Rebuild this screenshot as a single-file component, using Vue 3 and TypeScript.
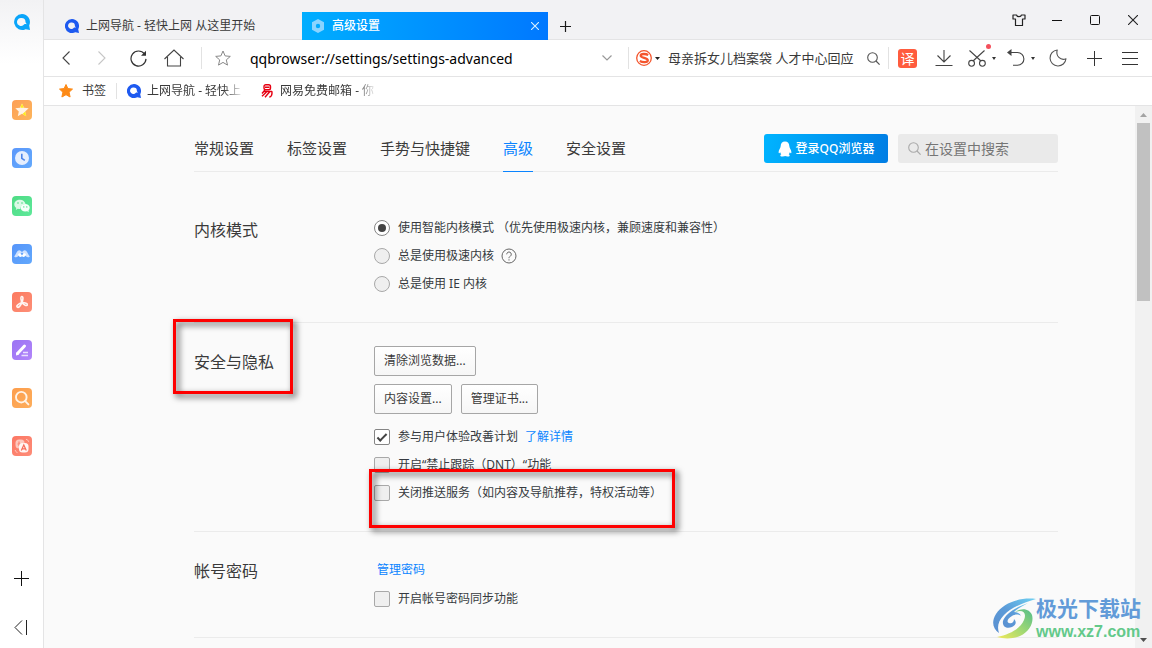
<script setup lang="ts">
import { ref } from 'vue'

interface SideApp { id: string; label: string; from: string; to: string }

const sideApps: SideApp[] = [
  { id: 'fav', label: '收藏', from: '#fd9f56', to: '#fdb55c' },
  { id: 'history', label: '历史', from: '#5b97fb', to: '#64aafc' },
  { id: 'wechat', label: '微信', from: '#4edb84', to: '#5ee89a' },
  { id: 'wave', label: '文档', from: '#5695fa', to: '#62a8fc' },
  { id: 'pdf', label: 'PDF', from: '#fc7a5f', to: '#fd8f78' },
  { id: 'edit', label: '编辑', from: '#9a74f3', to: '#b285fa' },
  { id: 'find', label: '搜索', from: '#fd9d4c', to: '#fdae5c' },
  { id: 'trans', label: '翻译', from: '#fc7764', to: '#fd8c78' },
]

const settingTabs = ['常规设置', '标签设置', '手势与快捷键', '高级', '安全设置']
const activeTab = ref('高级')
const kernel = ref('smart')
const joinPlan = ref(true)
const dnt = ref(false)
const closePush = ref(false)
const syncPassword = ref(false)
const address = ref('qqbrowser://settings/settings-advanced')
const query = ref('')
const settingQuery = ref('')
</script>

<template>
  <div class="browser">
    <aside class="side">
      <a class="side-logo" href="#" aria-label="QQ浏览器">
        <svg width="18" height="18" viewBox="0 0 18 18"><path fill="#0aa5fa" fill-rule="evenodd" d="M9 1a8 8 0 1 0 3.600 15.200L17 17l-.8-4.600A8 8 0 0 0 9 1zM8.500 5a4 4 0 0 1 4 4c0 .8.9 1.500 1.500 2.300-1.200-.4-2.100-.6-2.700 0A4 4 0 1 1 8.500 5z" /></svg>
      </a>
      <nav class="side-apps">
        <button v-for="app in sideApps" :key="app.id" type="button" class="side-btn" :aria-label="app.label">
          <svg width="20" height="20" viewBox="0 0 20 20">
            <defs>
              <linearGradient :id="'g-' + app.id" x1="0" y1="0" x2="1" y2="1">
                <stop offset="0" :stop-color="app.from" />
                <stop offset="1" :stop-color="app.to" />
              </linearGradient>
            </defs>
            <rect width="20" height="20" rx="4" :fill="'url(#g-' + app.id + ')'" />
            <g v-if="app.id === 'fav'">
              <path fill="#fff3e4" d="M10 3.500l2 4.300 4.700.5-3.500 3.200 1 4.700-4.200-2.400-4.200 2.400 1-4.700L3.300 8.300 8 7.800z" />
              <path fill="#ffeb1e" d="M10 3.500l1.900 4.300H9.200L8.300 7.400zM13.300 11.500l.9 4.700-3.700-2.100z" />
            </g>
            <g v-else-if="app.id === 'history'">
              <circle cx="10" cy="10" r="7" fill="#e6effe" />
              <path d="M9.800 5.800v4.600l3 2" fill="none" stroke="#4d84e8" stroke-width="1.600" />
            </g>
            <g v-else-if="app.id === 'wechat'">
              <path fill="#dcf9e6" d="M8 3.800c-3.200 0-5.700 2-5.700 4.600 0 1.500.8 2.700 2 3.600l-.5 1.900 2-1.100c1 .3 1.800.3 2.600.3 0-3 2.200-4.700 5.200-4.800C13.200 5.700 10.900 3.800 8 3.800z" />
              <ellipse cx="13.200" cy="11.800" rx="4.500" ry="3.800" fill="#f7fffa" />
              <path d="M15 15l1.700 1.300-.3-2.200z" fill="#f7fffa" />
              <g fill="#4edb84"><circle cx="6" cy="7" r=".8" /><circle cx="10" cy="7" r=".8" /><circle cx="11.800" cy="10.900" r=".7" /><circle cx="14.800" cy="10.900" r=".7" /></g>
            </g>
            <g v-else-if="app.id === 'wave'">
              <path d="M2.200 12.500C4 10.500 5 6.300 7.300 6.300c1.200 0 2 1 2.700 2 .7-1 1.500-2 2.700-2 2.300 0 3.300 4.200 5.100 6.200-1.200 1.300-2.800 1-3.900-.3L10 8.500l-3.900 3.700c-1.100 1.300-2.700 1.600-3.900.3z" fill="#cfe2ff" />
              <path d="M6 10.500c.8-1.600 2.300-1.600 3-.4l1 1.300 1-1.300c.7-1.200 2.200-1.200 3 .4-.7 2-2.200 3.500-4 1.800-1.800 1.700-3.300.2-4-1.800z" fill="#fff" />
            </g>
            <g v-else-if="app.id === 'pdf'" fill="none" stroke="#fff4f1" stroke-width="1.600" stroke-linecap="round">
              <path d="M10 10.500c-.8-2-1.900-5.700-.3-6s1.600 3 .3 6zM10 10.500c-1 2.400-3.300 5.700-4.700 4.700s.7-3.400 4.700-4.700zM10 10.500c3.400.2 5.700 1.100 5.300 2.400s-3.500.2-5.300-2.400z" />
            </g>
            <g v-else-if="app.id === 'edit'">
              <path d="M5.500 13.500l7-7.500" stroke="#fff" stroke-width="3" stroke-linecap="round" />
              <path d="M4 15.500l.4-3.200 2.500 2.500z" fill="#fff" />
              <path d="M11 12.500h5M9.500 15.500h6.500" stroke="#eadfff" stroke-width="1.500" />
            </g>
            <g v-else-if="app.id === 'find'" fill="none" stroke="#fff3e6" stroke-width="1.900" stroke-linecap="round">
              <circle cx="9.300" cy="9.200" r="5.300" /><path d="M13.200 13.200l3.200 3.200" />
            </g>
            <g v-else>
              <rect x="3.500" y="3.500" width="9" height="9" rx="3.500" fill="#fdc8be" />
              <path d="M5.500 8h3M7 5.500v4.500" stroke="#fc8675" stroke-width="1.200" />
              <rect x="7" y="7" width="9.500" height="9.500" rx="3.500" fill="#fff5f3" />
              <path d="M9.300 14.500l2.500-5.500 2.500 5.500M10.300 12.800h3" fill="none" stroke="#f76a58" stroke-width="1.200" />
              <path d="M14 3.300c1.500.3 2.400 1.200 2.700 2.500M3.200 14c.3 1.500 1 2.200 2.300 2.600" fill="none" stroke="#fdc8be" />
            </g>
          </svg>
        </button>
      </nav>
      <div class="side-foot">
        <button type="button" class="foot-btn" aria-label="添加">
          <svg width="15" height="15" viewBox="0 0 15 15"><path d="M7.500 0v15M0 7.500h15" stroke="#111" /></svg>
        </button>
        <button type="button" class="foot-btn" aria-label="收起">
          <svg width="15" height="15" viewBox="0 0 15 15"><path d="M8 .5l-7 7 7 7M12.500 0v15" fill="none" stroke="#222" /></svg>
        </button>
      </div>
    </aside>

    <div class="main">
      <header class="titlebar">
        <div class="tab">
          <svg class="tab-icon" width="14" height="14" viewBox="0 0 18 18"><path fill="#1e5af0" fill-rule="evenodd" d="M9 0a9 9 0 1 0 4.200 16.900L18 18l-1-4.800A9 9 0 0 0 9 0zM8.500 4.500a4.200 4.200 0 0 1 4.200 4.200c0 1 .9 1.800 1.600 2.700-1.200-.5-2.200-.6-2.900 0A4.200 4.200 0 1 1 8.500 4.500z" /></svg>
          <span class="tab-text">上网导航 - 轻快上网 从这里开始</span>
        </div>
        <div class="tab tab-active">
          <svg class="tab-icon" width="14" height="14" viewBox="0 0 14 14"><path fill="#8ad4ff" fill-rule="evenodd" d="M7 0l6 3.300v7.400L7 14l-6-3.300V3.300zM7 4.800a2.200 2.200 0 1 0 0 4.400 2.200 2.200 0 0 0 0-4.400z" /></svg>
          <span class="tab-text">高级设置</span>
          <button type="button" class="tab-close" aria-label="关闭标签">
            <svg width="8" height="8" viewBox="0 0 8 8"><path d="M0 0l8 8M8 0L0 8" stroke="#d8f0ff" stroke-width="1.100" /></svg>
          </button>
        </div>
        <button type="button" class="new-tab" aria-label="新建标签">
          <svg width="11" height="11" viewBox="0 0 11 11"><path d="M5.500 0v11M0 5.500h11" stroke="#1a1a1a" stroke-width="1.200" /></svg>
        </button>
        <div class="win">
          <button type="button" aria-label="皮肤"><svg width="14" height="12" viewBox="0 0 14 12"><path d="M1 1h3.500c.6 2.200 4.400 2.200 5 0H13v4h-2.500v6.500h-7V5H1z" fill="none" stroke="#222" stroke-width="1.200" stroke-linejoin="round" /></svg></button>
          <button type="button" aria-label="最小化"><svg width="10" height="2" viewBox="0 0 10 2"><path d="M0 1.500h10" stroke="#111" /></svg></button>
          <button type="button" aria-label="最大化"><svg width="10" height="10" viewBox="0 0 10 10"><rect x=".5" y=".5" width="9" height="9" rx="1" fill="none" stroke="#111" /></svg></button>
          <button type="button" aria-label="关闭"><svg width="10" height="10" viewBox="0 0 10 10"><path d="M0 0l10 10M10 0L0 10" stroke="#222" stroke-width="1.100" /></svg></button>
        </div>
      </header>

      <div class="toolbar">
        <div class="nav-btns">
          <button type="button" aria-label="后退"><svg width="8" height="14" viewBox="0 0 8 14"><path d="M7.500.5L1 7l6.500 6.500" fill="none" stroke="#444" stroke-width="1.100" /></svg></button>
          <button type="button" aria-label="前进"><svg width="8" height="14" viewBox="0 0 8 14"><path d="M.5.500L7 7 .5 13.500" fill="none" stroke="#c6c6c6" stroke-width="1.100" /></svg></button>
          <button type="button" aria-label="刷新"><svg width="17" height="17" viewBox="0 0 17 17"><path d="M14.500 4A7.500 7.500 0 1 0 16 8.900" fill="none" stroke="#333" stroke-width="1.200" /><path d="M16 .8v5h-5z" fill="#333" /></svg></button>
          <button type="button" aria-label="主页"><svg width="20" height="18" viewBox="0 0 20 18"><path d="M.5 10L10 1l9.500 9M3.500 8v9h13V8" fill="none" stroke="#444" stroke-width="1.100" /></svg></button>
        </div>
        <span class="rule"></span>
        <button type="button" class="star-btn" aria-label="收藏"><svg width="16" height="16" viewBox="0 0 16 16"><path d="M8 1l2.100 4.900 5.200.5-4 3.500 1.200 5.200L8 12.400l-4.500 2.700 1.200-5.200-4-3.500 5.200-.5z" fill="none" stroke="#888" /></svg></button>
        <input v-model="address" class="address" type="text" aria-label="地址" />
        <button type="button" class="drop-btn" aria-label="展开地址"><svg width="10" height="6" viewBox="0 0 10 6"><path d="M.5.500L5 5 9.500.5" fill="none" stroke="#999" stroke-width="1.200" /></svg></button>
        <span class="rule"></span>
        <div class="search">
          <button type="button" class="engine" aria-label="搜索引擎">
            <svg width="16" height="16" viewBox="0 0 16 16"><circle cx="8" cy="8" r="7.300" fill="#fff" stroke="#f4552d" stroke-width="1.300" /><path d="M12.200 5C10 3.700 4.700 3.400 4.700 5.700S11.800 7.700 11.800 10.200 6.500 12.500 3.800 11" fill="none" stroke="#f4552d" stroke-width="2.300" /></svg>
            <svg width="5" height="3" viewBox="0 0 5 3"><path d="M0 0h5L2.500 3z" fill="#222" /></svg>
          </button>
          <input v-model="query" class="search-text" type="text" aria-label="搜索" placeholder="母亲拆女儿档案袋 人才中心回应" />
          <button type="button" class="search-go" aria-label="搜索"><svg width="13" height="13" viewBox="0 0 13 13"><circle cx="5.500" cy="5.500" r="4.800" fill="none" stroke="#555" stroke-width="1.100" /><path d="M9 9l3.600 3.600" stroke="#555" stroke-width="1.200" /></svg></button>
        </div>
        <span class="rule"></span>
        <button type="button" class="tool tool-first"><span class="translate">译</span></button>
        <button type="button" class="tool" aria-label="下载"><svg width="18" height="18" viewBox="0 0 18 18"><path d="M9 1v12M2.500 6.500L9 13l6.500-6.500M.5 16.500h17" fill="none" stroke="#444" stroke-width="1.100" /></svg></button>
        <button type="button" class="tool tool-split" aria-label="截图">
          <svg width="18" height="18" viewBox="0 0 18 18"><path d="M1.500 1.500L13 12M16.500 1.500L5 12" stroke="#444" stroke-width="1.100" /><circle cx="3.600" cy="14.300" r="2.900" fill="none" stroke="#444" stroke-width="1.100" /><circle cx="14.400" cy="14.300" r="2.900" fill="none" stroke="#444" stroke-width="1.100" /></svg>
          <svg width="4" height="3" viewBox="0 0 4 3"><path d="M0 0h4L2 3z" fill="#333" /></svg>
          <span class="dot"></span>
        </button>
        <button type="button" class="tool tool-split" aria-label="撤销">
          <svg width="18" height="18" viewBox="0 0 18 18"><path d="M3 3.500h7.500a6.400 6.400 0 0 1 0 12.800H6" fill="none" stroke="#444" stroke-width="1.100" /><path d="M0 3.500L4.500 0v7z" fill="#444" /></svg>
          <svg width="4" height="3" viewBox="0 0 4 3"><path d="M0 0h4L2 3z" fill="#333" /></svg>
        </button>
        <button type="button" class="tool" aria-label="夜间模式"><svg width="18" height="18" viewBox="0 0 18 18"><path d="M8.200 1A8 8 0 1 0 17 9.800C11.500 12 6.500 7 8.200 1z" fill="none" stroke="#555" stroke-width="1.100" stroke-linejoin="round" /></svg></button>
        <button type="button" class="tool" aria-label="添加"><svg width="15" height="15" viewBox="0 0 15 15"><path d="M7.500 0v15M0 7.500h15" stroke="#333" /></svg></button>
        <button type="button" class="tool" aria-label="菜单"><svg width="16" height="13" viewBox="0 0 16 13"><path d="M0 .5h16M0 6.500h16M0 12.500h16" stroke="#333" /></svg></button>
      </div>

      <nav class="bookmarks">
        <a href="#" class="mark mark-root">
          <svg width="14" height="14" viewBox="0 0 14 14"><path d="M7 .5l1.900 4.100 4.600.5-3.400 3.100 1 4.800L7 10.700 2.900 13l1-4.800L.5 5.100l4.600-.5z" fill="#fd8a16" stroke="#fd8a16" stroke-linejoin="round" /></svg>
          <span>书签</span>
        </a>
        <span class="rule rule-short"></span>
        <a href="#" class="mark">
          <svg width="14" height="14" viewBox="0 0 18 18"><path fill="#1e5af0" fill-rule="evenodd" d="M9 0a9 9 0 1 0 4.200 16.900L18 18l-1-4.800A9 9 0 0 0 9 0zM8.500 4.500a4.200 4.200 0 0 1 4.200 4.200c0 1 .9 1.800 1.600 2.700-1.200-.5-2.200-.6-2.900 0A4.200 4.200 0 1 1 8.500 4.500z" /></svg>
          <span class="fade">上网导航 - 轻快上</span>
        </a>
        <a href="#" class="mark">
          <svg width="14" height="14" viewBox="0 0 14 14" fill="none" stroke="#e60012" stroke-width="1.400"><rect x="4" y=".8" width="6.500" height="5" rx="1.800" /><path d="M5 3.300h4.500M3 7.500h9M5 6L2 9.500M12 7.300c.3 3.500-.7 5.700-2.700 5.700M6.500 8L2 12.300M9.500 8L5 13.300" /></svg>
          <span class="fade">网易免费邮箱 - 你</span>
        </a>
      </nav>

      <div class="view">
        <main class="page">
          <header class="page-head">
            <nav class="set-tabs">
              <a v-for="t in settingTabs" :key="t" href="#" :class="{ on: t === activeTab }" @click.prevent="activeTab = t">{{ t }}</a>
            </nav>
            <div class="head-tools">
              <button type="button" class="login">
                <svg width="14" height="16" viewBox="0 0 14 16"><path d="M7 .5c-2.800 0-4.300 2-4.300 4.600C2.700 7 .6 9 .6 11.200c0 1 .4 1.300.9.900l.7-.9c.2.9.6 1.600 1.100 2.100-.8.400-1.100 1-.9 1.600C3 15.700 6 15.500 7 15c1 .5 4 .7 4.600-.1.200-.6-.1-1.200-.9-1.600.5-.5.9-1.200 1.100-2.100l.7.900c.5.400.9.100.9-.9 0-2.200-2.100-4.200-2.100-6.100C11.300 2.500 9.800.5 7 .5z" fill="#fff" /></svg>
                <span>登录QQ浏览器</span>
              </button>
              <label class="find">
                <svg width="13" height="13" viewBox="0 0 13 13"><circle cx="5.500" cy="5.500" r="4.800" fill="none" stroke="#aaa" stroke-width="1.100" /><path d="M9 9l3.600 3.600" stroke="#aaa" stroke-width="1.200" /></svg>
                <input v-model="settingQuery" type="text" aria-label="在设置中搜索" placeholder="在设置中搜索" />
              </label>
            </div>
          </header>

          <section class="block block-first">
            <h2>内核模式</h2>
            <div class="body">
              <div class="row"><label><input v-model="kernel" type="radio" name="kernel" value="smart" /><span>使用智能内核模式 （优先使用极速内核，兼顾速度和兼容性）</span></label></div>
              <div class="row">
                <label><input v-model="kernel" type="radio" name="kernel" value="fast" /><span>总是使用极速内核</span></label>
                <button type="button" class="help" aria-label="帮助"><svg width="16" height="16" viewBox="0 0 16 16" fill="none" stroke="#666"><circle cx="8" cy="8" r="7" /><path d="M5.700 6.300a2.300 2.300 0 1 1 3.600 1.900C8.300 8.900 8 9.200 8 10.200M8 11.300v1.200" /></svg></button>
              </div>
              <div class="row"><label><input v-model="kernel" type="radio" name="kernel" value="ie" /><span>总是使用 IE 内核</span></label></div>
            </div>
          </section>

          <section class="block">
            <h2 class="marked">安全与隐私<i class="frame frame-title"></i></h2>
            <div class="body">
              <div class="btns"><button type="button">清除浏览数据...</button></div>
              <div class="btns"><button type="button">内容设置...</button><button type="button">管理证书...</button></div>
              <div class="row"><label><input v-model="joinPlan" type="checkbox" /><span>参与用户体验改善计划</span></label><a href="#">了解详情</a></div>
              <div class="row"><label><input v-model="dnt" type="checkbox" /><span>开启“禁止跟踪（DNT）“功能</span></label></div>
              <div class="row marked"><label><input v-model="closePush" type="checkbox" /><span>关闭推送服务（如内容及导航推荐，特权活动等）</span></label><i class="frame frame-row"></i></div>
            </div>
          </section>

          <section class="block">
            <h2>帐号密码</h2>
            <div class="body">
              <div class="row row-link"><a href="#">管理密码</a></div>
              <div class="row"><label><input v-model="syncPassword" type="checkbox" /><span>开启帐号密码同步功能</span></label></div>
            </div>
          </section>
        </main>

        <div class="scroll" aria-hidden="true">
          <span class="arrow"><svg width="7" height="4" viewBox="0 0 7 4"><path d="M0 4h7L3.500 0z" fill="#a3a3a3" /></svg></span>
          <span class="track"><span class="thumb"></span></span>
          <span class="arrow"><svg width="7" height="4" viewBox="0 0 7 4"><path d="M0 0h7L3.500 4z" fill="#505050" /></svg></span>
        </div>
      </div>
    </div>

    <div class="watermark">
      <svg width="44" height="42" viewBox="0 0 44 42">
        <defs>
          <linearGradient id="wm-blue" x1="0" y1="1" x2="1" y2="0"><stop offset="0" stop-color="#5a8fd0" /><stop offset=".5" stop-color="#5b9bd8" /><stop offset="1" stop-color="#6fd0f2" /></linearGradient>
          <linearGradient id="wm-green" x1="0" y1="1" x2="1" y2="0"><stop offset="0" stop-color="#f3e95a" /><stop offset=".5" stop-color="#9fd873" /><stop offset="1" stop-color="#55bd8a" /></linearGradient>
        </defs>
        <path d="M44 1C28-1 11 5 4 16c-5 8-3 15 3 19-2-6-1-12 5-18C19 10 30 5 44 1z" fill="url(#wm-blue)" />
        <path d="M36 5C24 9 13 16 11 23c-1 6 4 8 9 6 4-2 5-5 2-8 0 3-2 5-5 4s-1-5 3-7c3-2 7-2 9 0-1-3-4-4-7-4 4-4 9-6 14-9z" fill="url(#wm-blue)" />
        <path d="M23 14c8-3 12 1 9 8-3 8-13 14-27 17 7 2 16 2 23-1 10-5 14-14 12-21-2-6-10-8-17-3z" fill="url(#wm-green)" />
      </svg>
      <div class="wm-text"><strong>极光下载站</strong><span>www.xz7.com</span></div>
    </div>
  </div>
</template>

<style>
body { margin: 0; }
</style>

<style scoped>
.browser {
  position: relative;
  display: flex;
  height: 100vh;
  overflow: hidden;
  background: #fff;
  color: #3a3a3a;
  font-family: "Noto Sans", "Noto Sans CJK SC", sans-serif;
  font-size: 12px;
  line-height: 18px;
}
.browser *, .browser *::before { box-sizing: border-box; }
button { margin: 0; padding: 0; border: 0; background: none; color: inherit; font: inherit; cursor: pointer; }
input { margin: 0; font: inherit; color: inherit; }
a { color: inherit; text-decoration: none; }
svg { display: block; flex: none; }

.side {
  flex: none;
  display: flex;
  flex-direction: column;
  width: 44px;
  border-right: 1px solid #e4e4e5;
  background: linear-gradient(#f2f2f4, #fff 64px);
}
.side-logo { display: flex; align-items: center; justify-content: center; height: 44px; }
.side-apps { display: flex; flex-direction: column; padding-top: 42px; }
.side-btn { display: flex; align-items: center; justify-content: center; height: 48px; }
.side-foot { display: flex; flex-direction: column; gap: 7px; margin-top: auto; }
.foot-btn { display: flex; align-items: center; justify-content: center; height: 42px; }

.main { flex: 1; min-width: 0; display: flex; flex-direction: column; }

.titlebar {
  flex: none;
  display: flex;
  align-items: flex-end;
  height: 40px;
  padding-left: 12px;
  background: #f2f2f4;
  box-shadow: inset 0 -1px #e4e4e5;
}
.tab { display: flex; align-items: center; gap: 7px; width: 246px; height: 28px; padding: 0 9px; }
.tab-active { background: linear-gradient(90deg, #00aeff, #0078ff); color: #fff; font-weight: 500; }
.tab-close { display: flex; margin-left: auto; }
.new-tab { display: flex; align-items: center; justify-content: center; width: 35px; height: 28px; }
.win { display: flex; align-self: stretch; margin-left: auto; }
.win button { display: flex; align-items: center; justify-content: center; width: 38px; }

.toolbar {
  flex: none;
  display: flex;
  align-items: center;
  height: 37px;
  padding: 0 4px;
  border-bottom: 1px solid #e4e4e5;
}
.nav-btns { display: flex; margin-right: 9px; }
.nav-btns button { display: flex; align-items: center; justify-content: center; width: 36px; height: 36px; }
.rule { flex: none; width: 1px; height: 22px; background: #e2e2e2; }
.rule-short { height: 16px; }
.star-btn { display: flex; align-items: center; justify-content: center; width: 42px; height: 36px; }
.address {
  flex: 1;
  min-width: 0;
  height: 30px;
  padding: 0 6px;
  border: 0;
  outline: 0;
  background: none;
  color: #000;
  font-size: 14px;
}
.drop-btn { display: flex; align-items: center; justify-content: center; width: 42px; height: 36px; }
.search { display: flex; align-items: center; width: 259px; padding-left: 7px; }
.engine { display: flex; align-items: center; gap: 3px; margin-right: 8px; }
.search-text { flex: 1; min-width: 0; height: 30px; padding: 0; border: 0; outline: 0; background: none; font-size: 13px; }
.search-text::placeholder { color: #3a3a3a; opacity: 1; }
.search-go { display: flex; align-items: center; justify-content: center; width: 30px; height: 36px; }
.tool { position: relative; display: flex; align-items: center; justify-content: center; width: 36px; height: 36px; }
.tool-first { width: 37px; }
.tool-split { gap: 6px; width: 39px; }
.translate {
  width: 19px;
  height: 19px;
  border-radius: 3px;
  background: #ff5c3e;
  color: #fff;
  font-size: 14px;
  line-height: 19px;
  text-align: center;
}
.dot { position: absolute; top: 4px; right: 10px; width: 5px; height: 5px; border-radius: 50%; background: #f4505c; }

.bookmarks {
  flex: none;
  display: flex;
  align-items: center;
  gap: 10px;
  height: 29px;
  padding-left: 15px;
  border-bottom: 1px solid #e4e4e5;
}
.mark { display: flex; align-items: center; gap: 6px; margin-right: 6px; }
.mark-root { gap: 9px; margin-right: 0; }
.fade {
  width: 97px;
  white-space: nowrap;
  -webkit-mask-image: linear-gradient(90deg, #000 76px, transparent);
  mask-image: linear-gradient(90deg, #000 76px, transparent);
}

.view { flex: 1; min-height: 0; display: flex; background: #fafafa; }
.page { flex: 1; min-width: 0; overflow: hidden; padding: 0 77px 0 150px; }
.page-head {
  display: flex;
  justify-content: space-between;
  height: 66px;
  border-bottom: 1px solid #ebebeb;
}
.set-tabs { display: flex; gap: 33px; height: 66px; font-size: 15px; line-height: 24px; white-space: nowrap; }
.set-tabs a { padding-top: 30px; }
.set-tabs .on { border-bottom: 1px solid #0a84ff; color: #0a84ff; }
.head-tools { display: flex; gap: 10px; padding-top: 28px; }
.login {
  display: flex;
  align-items: center;
  justify-content: center;
  gap: 4px;
  width: 124px;
  height: 29px;
  border-radius: 3px;
  background: linear-gradient(100deg, #00b4ff, #007de4);
  color: #fff;
  font-weight: 500;
  white-space: nowrap;
}
.find { display: flex; align-items: center; gap: 4px; width: 160px; height: 29px; padding: 0 10px; border-radius: 3px; background: #eaeaea; }
.find input { flex: 1; min-width: 0; height: 24px; padding: 0; border: 0; outline: 0; background: none; font-size: 14px; }
.find input::placeholder { color: #757575; opacity: 1; }

.block { display: flex; padding: 23px 0 24px; border-bottom: 1px solid #ebebeb; }
.block-first { padding-top: 42px; }
.block h2 { flex: none; width: 180px; margin: 0; padding-top: 5px; font-size: 16px; font-weight: 400; line-height: 22px; }
.body { flex: 1; min-width: 0; }
.row { display: flex; align-items: center; gap: 7px; height: 28px; color: #363a40; }
.row label { display: flex; align-items: center; gap: 8px; white-space: nowrap; }
.row a { color: #0a84ff; }
.row-link { height: 30px; padding-left: 3px; }
.help { display: flex; }
.btns { display: flex; gap: 9px; margin-bottom: 8px; }
.btns + .row { margin-top: 9px; }
.btns button {
  height: 30px;
  padding: 0 9px;
  border: 1px solid #a6a6a6;
  border-radius: 2px;
  background: linear-gradient(#fff, #f6f6f6);
}
.row input {
  appearance: none;
  display: grid;
  place-items: center;
  width: 16px;
  height: 16px;
  border: 1px solid #a8a8a8;
  border-radius: 2px;
  background: #efefef;
}
.row input[type="radio"] { border-radius: 50%; }
.row input:checked { border-color: #858585; background: #fff; }
.row input[type="radio"]:checked::before { content: ""; width: 8px; height: 8px; border-radius: 50%; background: #444; }
.row input[type="checkbox"]:checked::before {
  content: "";
  width: 10px;
  height: 5px;
  border: solid #444;
  border-width: 0 0 2px 2px;
  transform: translateY(-1px) rotate(-45deg);
}

.marked { position: relative; }
.frame {
  position: absolute;
  border: 3px solid #fe0000;
  filter: drop-shadow(3px 3px 3px rgba(0, 0, 0, 0.7));
  pointer-events: none;
}
.frame-title { left: -21px; top: -27px; width: 120px; height: 75px; }
.frame-row { left: -5px; top: -10px; width: 306px; height: 59px; }

.scroll { flex: none; display: flex; flex-direction: column; width: 17px; background: #f1f1f1; }
.arrow { display: flex; align-items: center; justify-content: center; height: 17px; }
.track { flex: 1; padding: 0 2px; }
.thumb { display: block; height: 35%; background: #c1c1c1; }

.watermark { position: absolute; right: 11px; bottom: 7px; display: flex; align-items: center; pointer-events: none; }
.wm-text { display: flex; flex-direction: column; gap: 3px; }
.wm-text strong { color: #629bd8; font-size: 21px; font-weight: 700; line-height: 24px; }
.wm-text span { color: #63c98a; font-family: "Liberation Sans", Arial, sans-serif; font-size: 16px; font-weight: 700; line-height: 18px; }
</style>
